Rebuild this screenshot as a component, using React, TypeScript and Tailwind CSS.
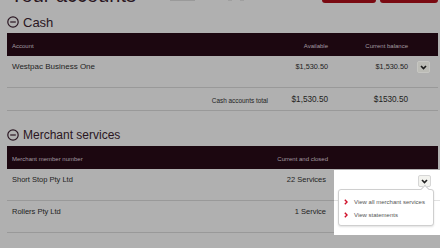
import React from 'react'

function MinusCircle() {
  return (
    <svg width="12" height="12" viewBox="0 0 12 12" className="shrink-0">
      <circle cx="6" cy="6" r="5.2" fill="none" stroke="#2a1622" strokeWidth="1.2" />
      <line x1="3.2" y1="6" x2="8.8" y2="6" stroke="#2a1622" strokeWidth="1.2" />
    </svg>
  )
}

function ChevronDown({ color = '#1a1a1a' }: { color?: string }) {
  return (
    <svg width="7" height="5" viewBox="0 0 7 5">
      <polyline points="1,1 3.5,3.6 6,1" fill="none" stroke={color} strokeWidth="1.6" />
    </svg>
  )
}

function RedChevron() {
  return (
    <svg width="4" height="6" viewBox="0 0 4 6" className="shrink-0">
      <polyline points="0.8,0.8 3,3 0.8,5.2" fill="none" stroke="#d0102a" strokeWidth="1.4" />
    </svg>
  )
}

const cols = 'grid grid-cols-[1fr_80px_80px_30px] pl-[5px]'

export default function App() {
  return (
    <div className="relative w-[440px] h-[248px] overflow-hidden bg-[#b0b0b0] font-['Liberation_Sans',Arial,sans-serif]">
      {/* Title row, scrolled mostly out of view */}
      <div className="flex h-[24px] -mt-[21px] items-end pl-[10px] pr-[2px]">
        <div className="text-[20px] leading-none text-[#2a1622] mb-[-2px]">Your accounts</div>
        <div className="ml-[34px] mb-[2px] h-[2px] w-[25px] bg-[#9a9a9a]" />
        <div className="ml-[33px] mb-[2px] h-[2px] w-[4px] bg-[#a0a0a0]" />
        <div className="ml-[8px] mb-[2px] h-[2px] w-[4px] bg-[#a0a0a0]" />
        <div className="ml-auto flex gap-[4px]">
          <div className="h-[20px] w-[54px] rounded-b-[3px] bg-[#7a0a12]" />
          <div className="h-[20px] w-[58px] rounded-b-[3px] bg-[#7a0a12]" />
        </div>
      </div>

      {/* Cash */}
      <div className="flex h-[30px] items-center gap-[4px] pl-[7px] pt-[8px]">
        <MinusCircle />
        <span className="text-[13px] leading-none text-[#2a1622]">Cash</span>
      </div>
      <div className="ml-[7px] mr-[2px]">
        <div className={`${cols} h-[23px] items-center pt-[3px] bg-[#1c0710] text-[6px] text-[#a39aa0]`}>
          <span>Account</span>
          <span className="text-right">Available</span>
          <span className="text-right">Current balance</span>
          <span />
        </div>
        <div className="h-[32px] pt-[5px] border-b border-[#999]">
          <div className={`${cols} h-[12px] items-center text-[#1e1e1e]`}>
            <span className="text-[8px]">Westpac Business One</span>
            <span className="text-right text-[7.3px]">$1,530.50</span>
            <span className="text-right text-[7.3px]">$1,530.50</span>
            <span className="flex justify-end pr-[8px]">
              <span className="flex h-[12px] w-[13px] items-center justify-center rounded-[2px] border border-[#c6c6c2] bg-[#bcbcb6]">
                <ChevronDown />
              </span>
            </span>
          </div>
        </div>
        <div className="grid h-[23px] grid-cols-[1fr_60px_80px_30px] items-center border-b border-[#999] pl-[5px] pt-[3px] text-[#1e1e1e]">
          <span className="text-right text-[6.4px]">Cash accounts total</span>
          <span className="text-right text-[8.2px]">$1,530.50</span>
          <span className="text-right text-[8.2px]">$1530.50</span>
          <span />
        </div>
      </div>

      {/* Merchant services */}
      <div className="flex h-[35px] items-center gap-[4px] pl-[7px] pt-[13px]">
        <MinusCircle />
        <span className="text-[12px] leading-none text-[#2a1622]">Merchant services</span>
      </div>
      <div className="ml-[7px] mr-[2px]">
        <div className={`${cols} h-[23px] items-center pt-[3px] bg-[#1c0710] text-[6px] text-[#a39aa0]`}>
          <span>Merchant member number</span>
          <span className="text-right">Current and closed</span>
          <span />
          <span />
        </div>
        {[
          { name: 'Short Stop Pty Ltd', count: '22 Services' },
          { name: 'Rollers Pty Ltd', count: '1 Service' },
        ].map((m) => (
          <div key={m.name} className="h-[32px] pt-[5px] border-b border-[#999]">
            <div className={`${cols} h-[12px] items-center text-[#1e1e1e] text-[7.5px]`}>
              <span>{m.name}</span>
              <span className="text-right pr-[2px]">{m.count}</span>
              <span />
              <span />
            </div>
          </div>
        ))}
      </div>

      {/* Highlighted action menu */}
      <div className="absolute left-[334px] top-[170px] h-[65px] w-[106px] bg-white">
        <div className="h-[31px] border-b border-[#e2e2e2]" />
        <div className="absolute left-[84px] top-[5px] flex h-[12px] w-[13px] items-center justify-center rounded-[2px] border border-[#d6d6d6] bg-[#f3f3ef]">
          <ChevronDown color="#222" />
        </div>
        <div className="absolute left-[4px] top-[19px] h-[37px] w-[96px] rounded-[3px] border border-[#cfcfcf] bg-white shadow-[0_1px_2px_rgba(0,0,0,0.12)]">
          <div className="absolute -top-[4px] left-[83px] h-[6px] w-[6px] rotate-45 border-l border-t border-[#cfcfcf] bg-white" />
          <div className="flex flex-col gap-[5px] pl-[5px] pt-[8px] text-[6px] leading-[8px] text-[#555]">
            <div className="flex items-center gap-[6px]">
              <RedChevron />
              <span>View all merchant services</span>
            </div>
            <div className="flex items-center gap-[6px]">
              <RedChevron />
              <span>View statements</span>
            </div>
          </div>
        </div>
      </div>
    </div>
  )
}
